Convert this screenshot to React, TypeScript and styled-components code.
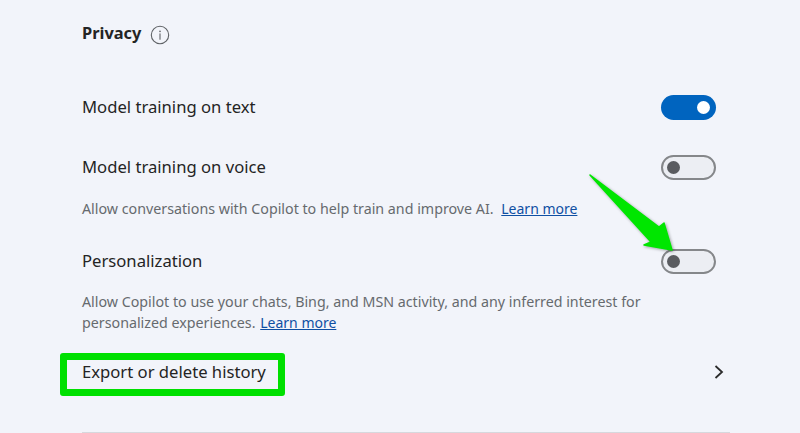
import React from "react";
import styled, { createGlobalStyle } from "styled-components";

const Global = createGlobalStyle`
  html, body { margin: 0; padding: 0; height: 433px; overflow: hidden; background: #f2f4fa; }
  #root { height: 433px; }
`;

const Page = styled.main`
  position: relative;
  width: 800px;
  height: 433px;
  overflow: hidden;
  box-sizing: border-box;
  padding: 0 84px 0 82px;
  background: #f2f4fa;
  color: #242424;
  font-family: "Noto Sans", sans-serif;
  display: flex;
  flex-direction: column;
`;

const Header = styled.header`
  height: 71px;
  display: flex;
  align-items: center;
  gap: 9px;
  box-sizing: border-box;
  padding-bottom: 2px;
`;

const Title = styled.h2`
  margin: 0;
  font-size: 16.4px;
  font-weight: 700;
  line-height: 20px;
  position: relative;
  top: -2px;
`;

const Row = styled.div<{ $height: number }>`
  height: ${(p) => p.$height}px;
  display: flex;
  align-items: center;
  justify-content: space-between;
`;

const Label = styled.span`
  font-size: 16.65px;
  line-height: 22px;
  color: #242424;
`;

const Description = styled.div<{ $height: number; $top: number }>`
  box-sizing: border-box;
  height: ${(p) => p.$height}px;
  padding-top: ${(p) => p.$top}px;
  font-size: 14.25px;
  line-height: 21px;
  color: #666a6e;
`;

const Line = styled.div`
  display: flex;
  white-space: pre;
`;

const Link = styled.a<{ $gap: number }>`
  color: #0f4fa3;
  font-size: 14px;
  text-decoration: underline;
  margin-left: ${(p) => p.$gap}px;
`;

const Toggle = styled.span<{ $on?: boolean }>`
  box-sizing: border-box;
  width: 55px;
  height: 25px;
  border-radius: 13px;
  display: flex;
  align-items: center;
  justify-content: ${(p) => (p.$on ? "flex-end" : "flex-start")};
  padding: 0 ${(p) => (p.$on ? 6 : 4)}px;
  background: ${(p) => (p.$on ? "#0064bf" : "#eceef3")};
  border: ${(p) => (p.$on ? "none" : "2px solid #85878a")};
`;

const Knob = styled.span<{ $on?: boolean }>`
  width: 13px;
  height: 13px;
  border-radius: 50%;
  background: ${(p) => (p.$on ? "#ffffff" : "#5a5c60")};
`;

const ExportRow = styled(Row)`
  margin-right: -8px;
`;

const Divider = styled.hr`
  margin: 29px -14px 0 0;
  border: 0;
  height: 1px;
  flex: none;
  background: #d6d8dd;
`;

const Highlight = styled.div`
  position: absolute;
  left: 60px;
  top: 353px;
  width: 225px;
  height: 43px;
  box-sizing: border-box;
  border: 7px solid #00e000;
  border-radius: 3px;
`;

const Arrow = styled.svg`
  position: absolute;
  left: 580px;
  top: 168px;
  filter: drop-shadow(1px 1px 1.5px rgba(0, 0, 0, 0.35));
`;

const InfoIcon = () => (
  <svg width="20" height="20" viewBox="0 0 20 20" fill="none">
    <circle cx="10" cy="10" r="8.7" stroke="#5f6266" strokeWidth="1.1" />
    <circle cx="10" cy="6.4" r="0.8" fill="#5f6266" />
    <path d="M10 8.9V14.2" stroke="#5f6266" strokeWidth="1.1" strokeLinecap="round" />
  </svg>
);

const Chevron = () => (
  <svg width="10" height="14" viewBox="0 0 10 14" fill="none">
    <path d="M1.5 1L8 7L1.5 13" stroke="#2b2b2b" strokeWidth="1.8" />
  </svg>
);

export default function App() {
  return (
    <Page>
      <Global />
      <Header>
        <Title>Privacy</Title>
        <InfoIcon />
      </Header>
      <Row $height={72}>
        <Label>Model training on text</Label>
        <Toggle $on>
          <Knob $on />
        </Toggle>
      </Row>
      <Row $height={48}>
        <Label>Model training on voice</Label>
        <Toggle>
          <Knob />
        </Toggle>
      </Row>
      <Description $height={47} $top={7}>
        <Line>
          <span>Allow conversations with Copilot to help train and improve AI. </span>
          <Link $gap={4}>Learn more</Link>
        </Line>
      </Description>
      <Row $height={46}>
        <Label>Personalization</Label>
        <Toggle>
          <Knob />
        </Toggle>
      </Row>
      <Description $height={57} $top={7}>
        <Line>Allow Copilot to use your chats, Bing, and MSN activity, and any inferred interest for</Line>
        <Line>
          <span>personalized experiences. </span>
          <Link $gap={1}>Learn more</Link>
        </Line>
      </Description>
      <ExportRow $height={62}>
        <Label>Export or delete history</Label>
        <Chevron />
      </ExportRow>
      <Divider />
      <Highlight />
      <Arrow width="100" height="90" viewBox="0 0 100 90">
        <path d="M10 7L79 59L84 55L92 82L64 77L71 74L10 7Z" fill="#00e600" stroke="#00e600" strokeWidth="1.5" strokeLinejoin="round" />
      </Arrow>
    </Page>
  );
}
